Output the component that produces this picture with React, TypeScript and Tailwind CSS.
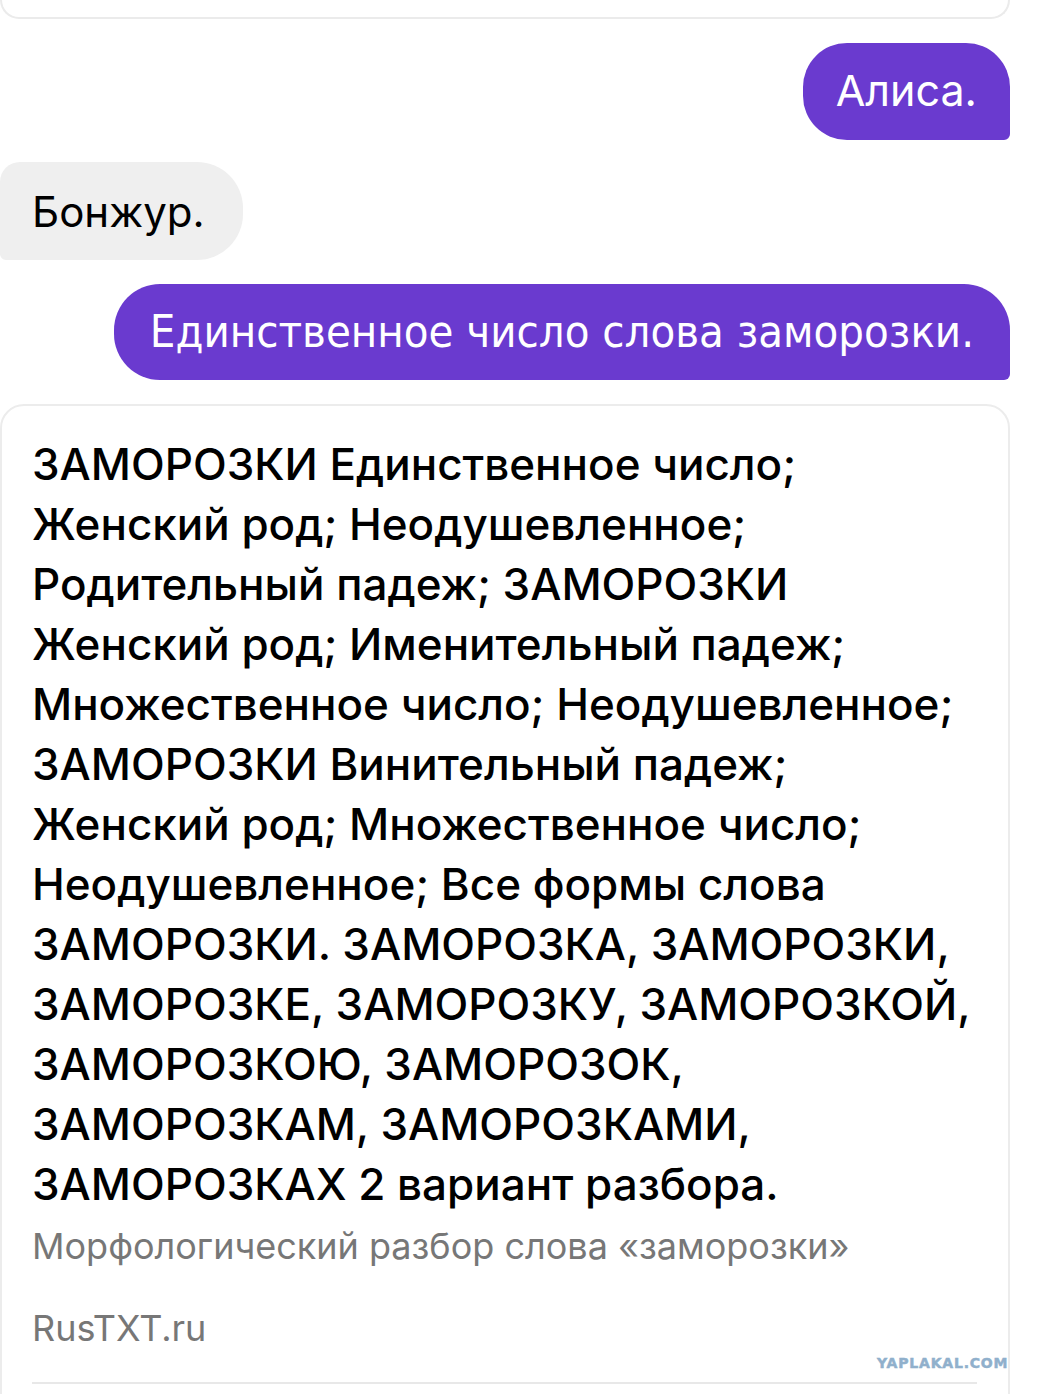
const lines = [
  "ЗАМОРОЗКИ Единственное число;",
  "Женский род; Неодушевленное;",
  "Родительный падеж; ЗАМОРОЗКИ",
  "Женский род; Именительный падеж;",
  "Множественное число; Неодушевленное;",
  "ЗАМОРОЗКИ Винительный падеж;",
  "Женский род; Множественное число;",
  "Неодушевленное; Все формы слова",
  "ЗАМОРОЗКИ. ЗАМОРОЗКА, ЗАМОРОЗКИ,",
  "ЗАМОРОЗКЕ, ЗАМОРОЗКУ, ЗАМОРОЗКОЙ,",
  "ЗАМОРОЗКОЮ, ЗАМОРОЗОК,",
  "ЗАМОРОЗКАМ, ЗАМОРОЗКАМИ,",
  "ЗАМОРОЗКАХ 2 вариант разбора.",
];

const App = () => {
  return (
    <div className="relative flex h-[1394px] w-[1038px] flex-col overflow-hidden bg-white font-['Inter',sans-serif]">
      {/* Previous card (cut off at top) */}
      <div className="h-[19px] w-[1010px] shrink-0 rounded-b-[24px] border-x-2 border-b-2 border-[#ebebeb]" />

      {/* User: Алиса. */}
      <div className="mt-[24px] mr-[28px] flex h-[97px] shrink-0 items-center self-end rounded-[44px] rounded-br-[6px] bg-[#6a3acf] px-[33px] pb-[2px]">
        <span className="text-[43px] font-normal whitespace-nowrap text-white">Алиса.</span>
      </div>

      {/* Alice: Бонжур. */}
      <div className="mt-[22px] flex h-[98px] w-[243px] shrink-0 items-center rounded-r-[46px] rounded-tl-[20px] rounded-bl-[6px] bg-[#efefef] pl-[32px]">
        <span className="text-[42px] font-normal whitespace-nowrap text-black">Бонжур.</span>
      </div>

      {/* User question */}
      <div className="mt-[24px] mr-[28px] flex h-[96px] shrink-0 items-center self-end rounded-[46px] rounded-br-[6px] bg-[#6a3acf] px-[36px]">
        <span className="font-['DejaVu_Sans_Condensed',sans-serif] text-[45px] whitespace-nowrap text-white">
          Единственное число слова заморозки.
        </span>
      </div>

      {/* Answer card */}
      <div className="mt-[24px] w-[1010px] shrink-0 rounded-[24px] border-2 border-[#ececec] pt-[28px] pl-[30px] pb-[200px]">
        <div className="text-[44px] leading-[60px] font-medium text-black">
          {lines.map((l) => (
            <div key={l} className="whitespace-nowrap">{l}</div>
          ))}
        </div>
        <div className="mt-[8px] text-[36px] leading-[48px] whitespace-nowrap text-[#777777]">
          Морфологический разбор слова «заморозки»
        </div>
        <div className="mt-[34px] text-[36px] leading-[48px] text-[#777777]">RusTXT.ru</div>
        <div className="mt-[30px] mr-[31px] h-[2px] bg-[#e8e8e8]" />
      </div>

      {/* Watermark */}
      <div className="absolute top-[1356px] left-[877px] font-['DejaVu_Sans',sans-serif] text-[14px] leading-[14px] font-bold tracking-[0.8px] text-[#90b0cc] [-webkit-text-stroke:0.5px_#90b0cc]">
        YAPLAKAL.COM
      </div>
    </div>
  );
};

export default App;
